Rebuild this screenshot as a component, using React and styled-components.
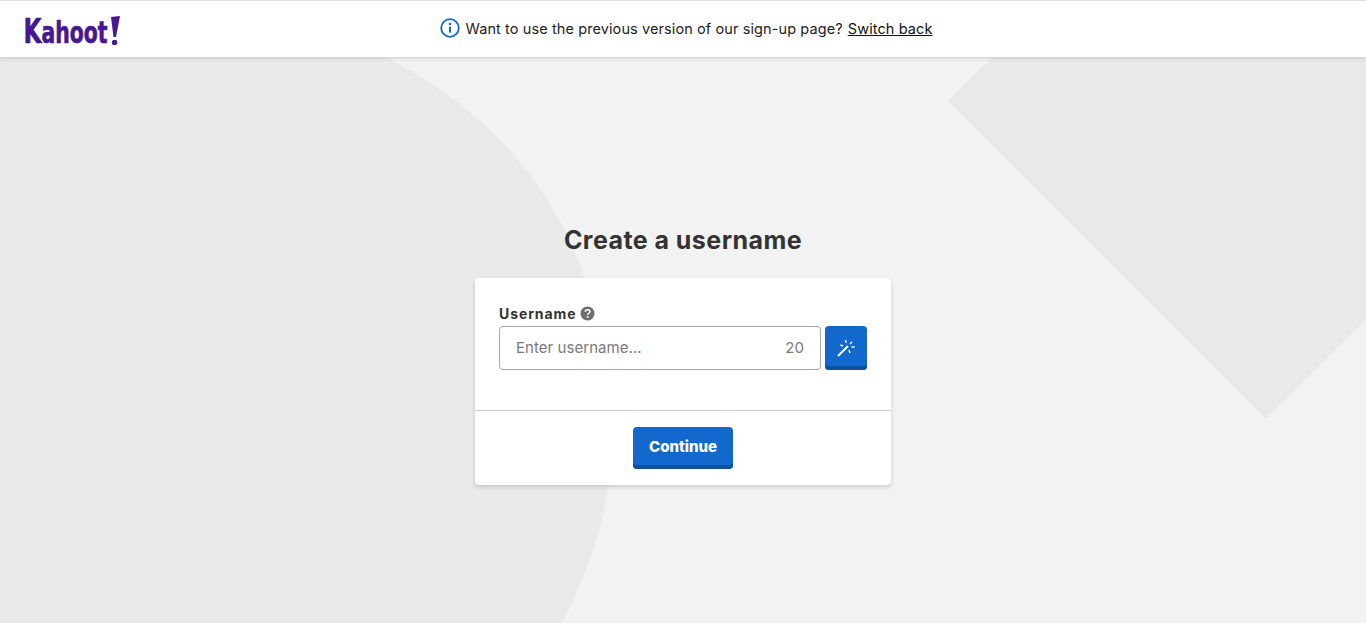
import React from "react";
import styled, { createGlobalStyle } from "styled-components";

const Global = createGlobalStyle`
  html, body { margin: 0; padding: 0; height: 100%; }
  body { background: #f2f2f2; font-family: Inter, "Open Sans", "Liberation Sans", sans-serif; color: #333; overflow: hidden; }
`;

const Page = styled.div`
  position: relative;
  height: 623px;
  display: flex;
  flex-direction: column;
  overflow: hidden;
`;
const Backdrop = styled.svg`
  position: absolute;
  inset: 0;
  width: 1366px;
  height: 623px;
`;
const Header = styled.header`
  position: relative;
  height: 56px;
  flex: none;
  background: #fff;
  border-top: 1px solid #e0e0e0;
  box-shadow: 0 1px 4px rgba(0, 0, 0, 0.16);
  display: flex;
  align-items: center;
  justify-content: center;
`;
const LogoMark = styled.svg`
  position: absolute;
  left: 22px;
  top: 11px;
`;
const Notice = styled.p`
  margin: 0 0 2px;
  padding-left: 6px;
  display: flex;
  align-items: center;
  gap: 6px;
  font-size: 14.5px;
  font-weight: 400;
  letter-spacing: 0.1px;
  color: #222;
`;
const SwitchBack = styled.a`
  color: #111;
  text-decoration: underline;
  margin-left: -1px;
`;
const Main = styled.main`
  position: relative;
  display: flex;
  flex-direction: column;
  align-items: center;
  padding-top: 168px;
`;
const Title = styled.h1`
  margin: 0 0 23px;
  font-size: 25px;
  line-height: 30px;
  font-weight: 700;
  letter-spacing: 0.45px;
  color: #333;
`;
const Card = styled.section`
  width: 416px;
  height: 207px;
  background: #fff;
  border-radius: 4px;
  box-shadow: 0 2px 4px rgba(0, 0, 0, 0.16);
  display: flex;
  flex-direction: column;
`;
const Body = styled.div`
  box-sizing: border-box;
  height: 133px;
  flex: none;
  padding: 27px 24px 0;
  border-bottom: 1px solid #ccc;
`;
const Label = styled.label`
  box-sizing: border-box;
  display: flex;
  align-items: center;
  gap: 4px;
  height: 18px;
  padding-bottom: 1px;
  margin-bottom: 3px;
  font-size: 14px;
  font-weight: 700;
  letter-spacing: 0.9px;
  color: #333;
`;
const Row = styled.div`
  display: flex;
  gap: 4px;
`;
const Field = styled.div`
  box-sizing: border-box;
  width: 322px;
  height: 44px;
  padding: 0 16px 1px;
  border: 1px solid #a6a6a6;
  border-radius: 4px;
  background: #fff;
  display: flex;
  align-items: center;
  justify-content: space-between;
  font-size: 15px;
  letter-spacing: 0.05px;
  color: #7a7a7a;
`;
const Button3D = styled.button`
  box-sizing: border-box;
  height: ${(p) => p.$h}px;
  width: ${(p) => p.$w}px;
  padding: 0 0 ${(p) => p.$pad}px;
  border: 0;
  border-radius: 4px;
  background: #1368ce;
  box-shadow: inset 0 -4px 0 #0f5099;
  color: #fff;
  font-family: inherit;
  font-size: 15px;
  font-weight: 800;
  display: flex;
  align-items: center;
  justify-content: center;
`;
const Footer = styled.div`
  flex: 1;
  display: flex;
  justify-content: center;
  padding-top: 16px;
`;

const Logo = () => (
  <LogoMark width="100" height="36" viewBox="0 0 100 36" aria-label="Kahoot!">
    <text
      transform="translate(1.5 31) scale(0.68 1)"
      fill="#46178f"
      stroke="#46178f"
      strokeWidth="0.7"
      fontFamily="'DejaVu Sans', sans-serif"
      fontWeight="700"
      fontSize="30"
    >
      <tspan fontSize="34">K</tspan>ahoot
    </text>
    <path d="M89 5 L98 4 L94 25 L91.5 25 Z" fill="#46178f" />
    <circle cx="92.6" cy="30.5" r="2.7" fill="#46178f" />
  </LogoMark>
);

const InfoIcon = () => (
  <svg width="20" height="20" viewBox="0 0 20 20" fill="none">
    <circle cx="10" cy="10" r="8.8" stroke="#1368ce" strokeWidth="1.8" />
    <rect x="9" y="8.6" width="2" height="6" fill="#1368ce" />
    <circle cx="10" cy="6" r="1.3" fill="#1368ce" />
  </svg>
);

const HelpIcon = () => (
  <svg width="15" height="15" viewBox="0 0 15 15">
    <circle cx="7.5" cy="7.5" r="7" fill="#6e6e6e" />
    <path d="M5.2 5.8 C5.3 4.5 6.3 3.8 7.6 3.8 C9 3.8 9.9 4.6 9.9 5.7 C9.9 7.2 7.7 7.3 7.6 8.9" fill="none" stroke="#fff" strokeWidth="1.5" />
    <circle cx="7.6" cy="11" r="1" fill="#fff" />
  </svg>
);

const WandIcon = () => (
  <svg width="18" height="18" viewBox="0 0 18 18" stroke="#fff" strokeWidth="1.5" fill="none">
    <path d="M1 17 L11 7" strokeWidth="2" />
    <path d="M8.5 1 L9 4 M15 3 L13 5 M17.5 8 L14.5 8 M12 11 L13 14 M3.5 6 L6 7" />
  </svg>
);

export default function App() {
  return (
    <>
      <Global />
      <Page>
        <Backdrop viewBox="0 0 1366 623">
          <path d="M0 57 L385 57 C495 112 577 205 600 340 C626 440 610 530 562 623 L0 623 Z" fill="#e9e9e9" />
          <path d="M992 57 L948 101 L1266 419 L1366 320 L1366 57 Z" fill="#e9e9e9" />
        </Backdrop>
        <Header>
          <Logo />
          <Notice>
            <InfoIcon />
            <span>Want to use the previous version of our sign-up page?</span>
            <SwitchBack>Switch back</SwitchBack>
          </Notice>
        </Header>
        <Main>
          <Title>Create a username</Title>
          <Card>
            <Body>
              <Label>
                Username <HelpIcon />
              </Label>
              <Row>
                <Field>
                  <span>Enter username...</span>
                  <span>20</span>
                </Field>
                <Button3D $w={42} $h={44} $pad={0} aria-label="Generate">
                  <WandIcon />
                </Button3D>
              </Row>
            </Body>
            <Footer>
              <Button3D $w={100} $h={42} $pad={4}>Continue</Button3D>
            </Footer>
          </Card>
        </Main>
      </Page>
    </>
  );
}
